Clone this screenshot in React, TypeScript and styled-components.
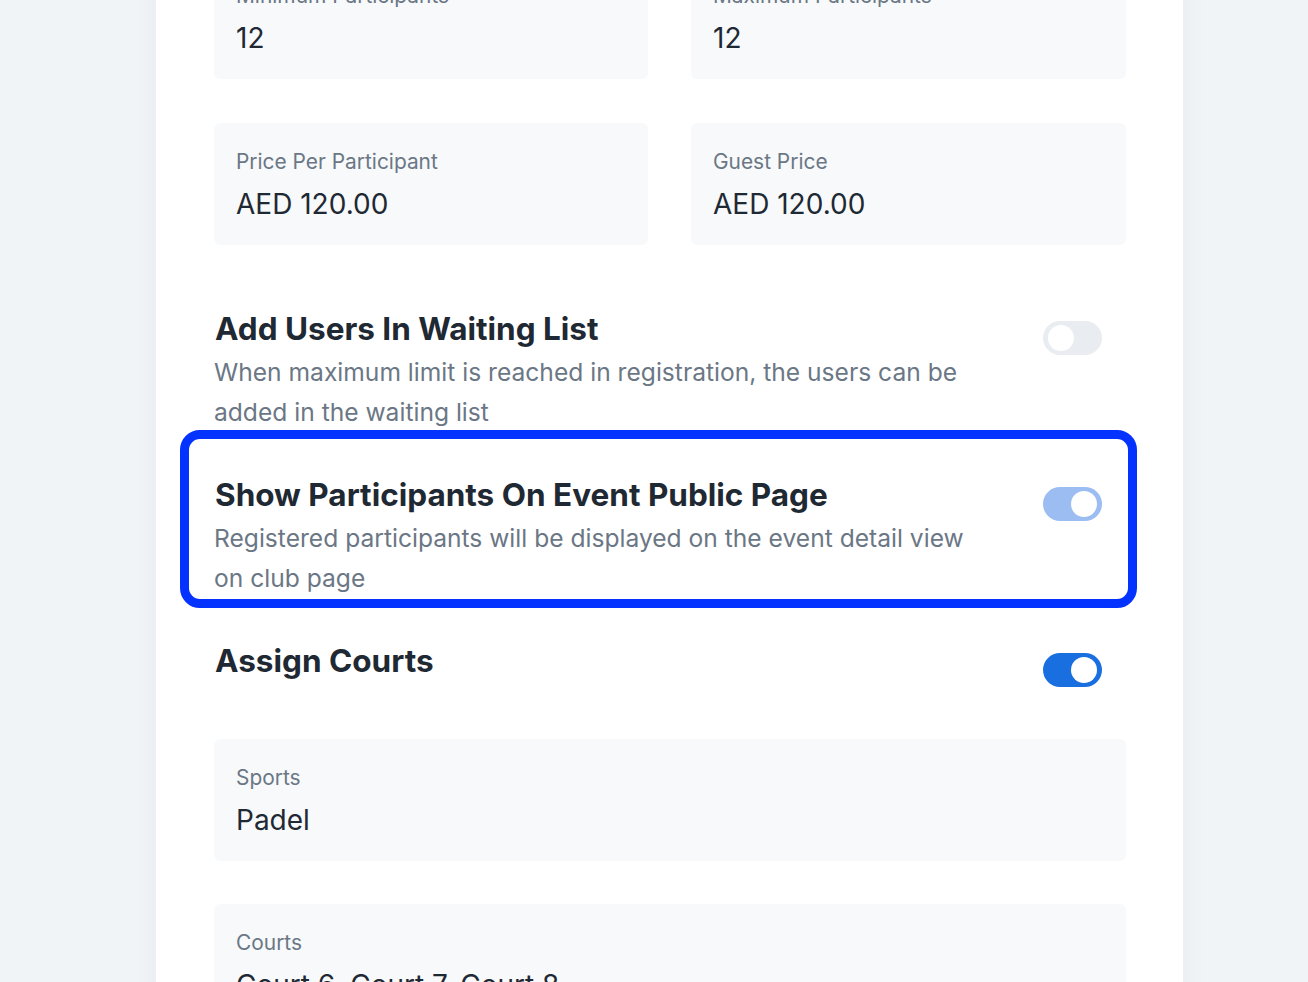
import React from 'react'
import styled, { createGlobalStyle } from 'styled-components'

const GlobalStyle = createGlobalStyle`
  html, body {
    margin: 0;
    padding: 0;
    background: #f1f4f7;
    font-family: Inter, "Noto Sans", "Liberation Sans", sans-serif;
    overflow: hidden;
  }
`

type ToggleState = 'off' | 'soft' | 'on'

interface FieldProps {
  label: string,
  value: string
}

const Field: React.FC<FieldProps> = ({ label, value }) => (
  <StyledField>
    <FieldLabel>{label}</FieldLabel>
    <FieldValue>{value}</FieldValue>
  </StyledField>
)

interface SettingProps {
  title: string,
  description?: string,
  state: ToggleState,
  highlighted?: boolean
}

const Setting: React.FC<SettingProps> = ({ title, description, state, highlighted }) => (
  <SettingRow $highlighted={highlighted}>
    <SettingText>
      <SettingTitle>{title}</SettingTitle>
      {description && <SettingDescription>{description}</SettingDescription>}
    </SettingText>
    <Toggle $state={state}>
      <Knob $state={state} />
    </Toggle>
  </SettingRow>
)

const App: React.FC = () => {
  return (
    <Page>
      <GlobalStyle />
      <Card>
        <FieldGrid>
          <Field label="Minimum Participants" value="12" />
          <Field label="Maximum Participants" value="12" />
          <Field label="Price Per Participant" value="AED 120.00" />
          <Field label="Guest Price" value="AED 120.00" />
        </FieldGrid>

        <Settings>
          <Setting
            title="Add Users In Waiting List"
            description="When maximum limit is reached in registration, the users can be added in the waiting list"
            state="off"
          />
          <Setting
            title="Show Participants On Event Public Page"
            description="Registered participants will be displayed on the event detail view on club page"
            state="soft"
            highlighted
          />
          <Setting title="Assign Courts" state="on" />
        </Settings>

        <FieldStack>
          <Field label="Sports" value="Padel" />
          <Field label="Courts" value="Court 6, Court 7, Court 8" />
        </FieldStack>
      </Card>
    </Page>
  )
}

const Page = styled.div`
  width: 1308px;
  height: 982px;
  overflow: hidden;
  background: #f1f4f7;
`

const Card = styled.div`
  margin: -43px 0 0 156px;
  width: 1027px;
  min-height: 1100px;
  box-sizing: border-box;
  padding: 0 57px 0 58px;
  background: #ffffff;
  box-shadow: 0 0 24px rgba(30, 50, 80, 0.05);
`

const FieldGrid = styled.div`
  display: grid;
  grid-template-columns: 434px 435px;
  column-gap: 43px;
  row-gap: 44px;
`

const FieldStack = styled.div`
  display: flex;
  flex-direction: column;
  gap: 43px;
  margin-top: 30px;
`

const StyledField = styled.div`
  height: 122px;
  box-sizing: border-box;
  padding: 25px 22px 0;
  background: #f7f9fb;
  border-radius: 6px;
`

const FieldLabel = styled.div`
  font-size: 20.9px;
  line-height: 28px;
  color: #6b7785;
`

const FieldValue = styled.div`
  margin-top: 10px;
  font-size: 28px;
  line-height: 36px;
  color: #1f2933;
`

const Settings = styled.div`
  display: flex;
  flex-direction: column;
  margin-top: 43px;
`

const SettingRow = styled.div<{ $highlighted?: boolean }>`
  position: relative;
  display: flex;
  justify-content: space-between;
  align-items: flex-start;
  padding: 21px 24px 22px 1px;

  ${props => props.$highlighted && `
    &::before {
      content: '';
      position: absolute;
      top: -24px;
      bottom: 12px;
      left: -34px;
      right: -11px;
      border: 9px solid #0433ff;
      border-radius: 20px;
      pointer-events: none;
    }
  `}
`

const SettingText = styled.div`
  width: 770px;
`

const SettingTitle = styled.div`
  font-size: 31.5px;
  line-height: 40px;
  font-weight: 700;
  color: #1f2933;
`

const SettingDescription = styled.div`
  margin-top: 4px;
  margin-left: -1px;
  font-size: 24.6px;
  line-height: 39.5px;
  color: #6b7785;
`

const toggleColors: Record<ToggleState, string> = {
  off: '#e9edf1',
  soft: '#9bbdf2',
  on: '#1a6fe0'
}

const Toggle = styled.div<{ $state: ToggleState }>`
  position: relative;
  flex-shrink: 0;
  margin-top: 12px;
  width: 59px;
  height: 34px;
  border-radius: 17px;
  background: ${props => toggleColors[props.$state]};
`

const Knob = styled.div<{ $state: ToggleState }>`
  position: absolute;
  top: 4px;
  left: ${props => (props.$state === 'off' ? '5px' : '28px')};
  width: 26px;
  height: 26px;
  border-radius: 50%;
  background: #ffffff;
`

export default App
